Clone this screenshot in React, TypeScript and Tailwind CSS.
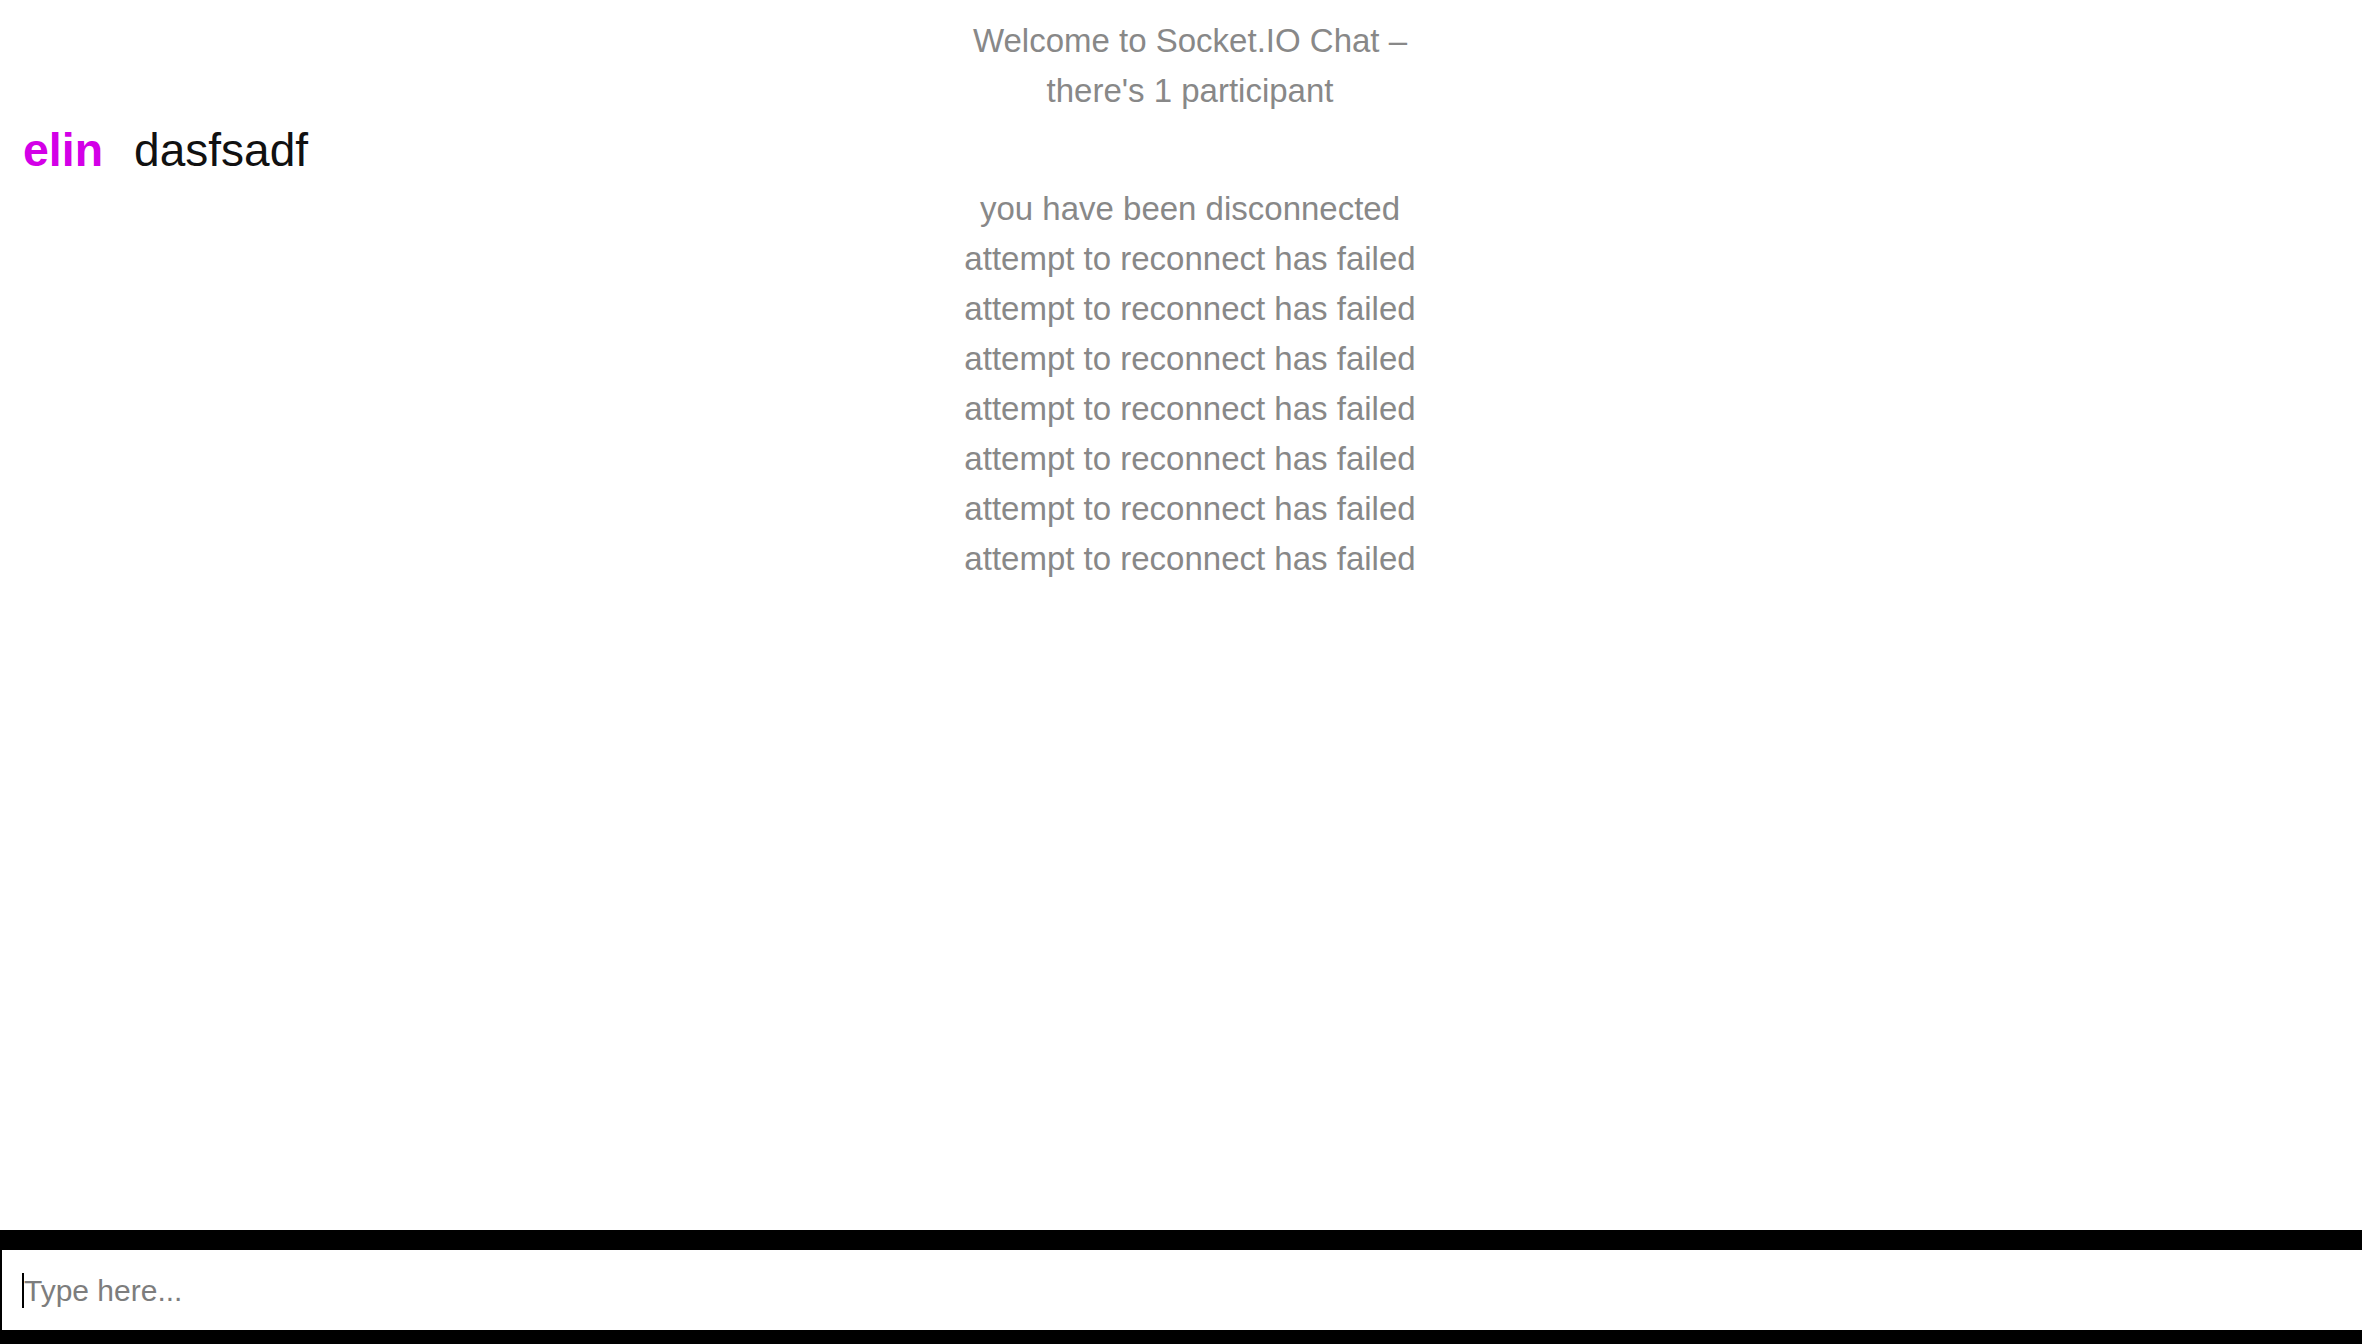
import { useState } from "react";

type Item =
  | { kind: "log"; text: string }
  | { kind: "message"; username: string; color: string; body: string };

const items: Item[] = [
  { kind: "log", text: "Welcome to Socket.IO Chat –" },
  { kind: "log", text: "there's 1 participant" },
  { kind: "message", username: "elin", color: "#d300e7", body: "dasfsadf" },
  { kind: "log", text: "you have been disconnected" },
  { kind: "log", text: "attempt to reconnect has failed" },
  { kind: "log", text: "attempt to reconnect has failed" },
  { kind: "log", text: "attempt to reconnect has failed" },
  { kind: "log", text: "attempt to reconnect has failed" },
  { kind: "log", text: "attempt to reconnect has failed" },
  { kind: "log", text: "attempt to reconnect has failed" },
  { kind: "log", text: "attempt to reconnect has failed" },
];

function App() {
  const [message, setMessage] = useState("");

  return (
    <div className="w-screen h-screen bg-white flex flex-col overflow-hidden font-['Liberation_Sans',Arial,sans-serif]">
      <ul className="flex-1 pt-[11px] pl-[20px] pr-[2px] list-none">
        {items.map((item, index) =>
          item.kind === "log" ? (
            <li
              key={index}
              className="my-[10px] text-center text-[#888888] text-[33px] leading-[40px]"
            >
              {item.text}
            </li>
          ) : (
            <li
              key={index}
              className="pl-[3px] text-[47px] leading-[58px] text-[#111111]"
            >
              <span
                className="font-bold pr-[31px] text-[46.5px]"
                style={{ color: item.color }}
              >
                {item.username}
              </span>
              <span className="text-[46px]">{item.body}</span>
            </li>
          )
        )}
      </ul>
      <div className="relative h-[114px] border-t-[20px] border-l-[2px] border-b-[14px] border-black bg-white">
        <input
          className="w-full h-full pl-[22px] pt-[2px] outline-none text-[30px] text-black placeholder:text-[#7d7d7d] font-['Liberation_Sans',Arial,sans-serif]"
          placeholder="Type here..."
          value={message}
          onChange={(e) => setMessage(e.target.value)}
        />
        {message === "" && (
          <span className="absolute left-[20px] top-[23px] w-[2px] h-[35px] bg-black pointer-events-none" />
        )}
      </div>
    </div>
  );
}

export default App;
